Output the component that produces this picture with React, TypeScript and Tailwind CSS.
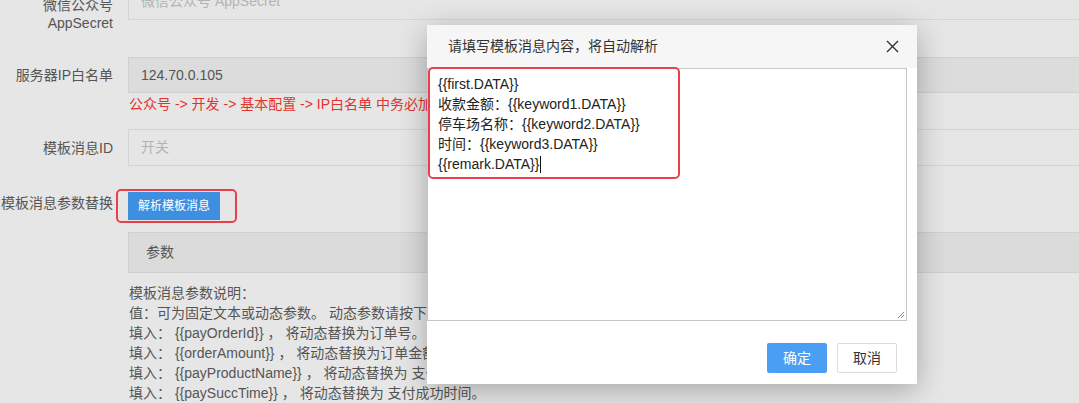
import React from "react";

const FONT = "font-['Liberation_Sans','Noto_Sans_CJK_SC',sans-serif]";

const descLines = [
  "模板消息参数说明：",
  "值：可为固定文本或动态参数。 动态参数请按下列格式填写：",
  "填入： {{payOrderId}} ， 将动态替换为订单号。",
  "填入： {{orderAmount}} ， 将动态替换为订单金额。",
  "填入： {{payProductName}} ， 将动态替换为 支付商品名称。",
  "填入： {{paySuccTime}} ， 将动态替换为 支付成功时间。",
];

const templateLines = [
  "{{first.DATA}}",
  "收款金额：{{keyword1.DATA}}",
  "停车场名称：{{keyword2.DATA}}",
  "时间：{{keyword3.DATA}}",
];

function Label({ children, className = "" }: { children: React.ReactNode; className?: string }) {
  return <div className={`w-[113px] shrink-0 text-right text-[14px] text-[#555] ${className}`}>{children}</div>;
}

export default function App() {
  return (
    <div className={`relative w-[1079px] h-[403px] overflow-hidden bg-[#e6e6e6] ${FONT}`}>
      {/* form behind the dialog */}
      <div className="-mt-[17px] flex flex-col w-[1100px]">
        {/* AppSecret */}
        <div className="flex gap-[15px] h-[37px]">
          <Label className="pt-[13px] leading-[18px] h-[37px] overflow-visible">
            微信公众号
            <br />
            AppSecret
          </Label>
          <div className="flex-1 h-[37px] border border-[#d4d4d4] flex items-center px-[12px] text-[14px] text-[#b3b3b3]">
            微信公众号 AppSecret
          </div>
        </div>

        {/* IP whitelist */}
        <div className="mt-[37px] flex gap-[15px] items-center">
          <Label className="leading-[20px]">服务器IP白名单</Label>
          <div className="flex-1 h-[36px] border border-[#d0d0d0] bg-[#dcdcdc] flex items-center px-[12px] text-[14px] text-[#555]">
            124.70.0.105
          </div>
        </div>
        <div className="mt-[1px] ml-[129px] w-[298px] overflow-hidden text-[14px] leading-[20px] text-[#e2332f] whitespace-nowrap">
          公众号 -&gt; 开发 -&gt; 基本配置 -&gt; IP白名单 中务必加入该服务器IP
        </div>

        {/* template id */}
        <div className="mt-[15px] flex gap-[15px] items-center">
          <Label className="leading-[20px]">模板消息ID</Label>
          <div className="flex-1 h-[37px] border border-[#d4d4d4] flex items-center px-[12px] text-[14px] text-[#b3b3b3]">
            开关
          </div>
        </div>

        {/* param replace */}
        <div className="mt-[26px] flex gap-[15px] items-start">
          <Label className="pt-[1px] leading-[20px] whitespace-nowrap">模板消息参数替换</Label>
          <div className="flex flex-col flex-1">
            <div className="h-[28px] w-[92px] bg-[#3f8fe0] text-white text-[12px] flex items-center justify-center">
              解析模板消息
            </div>
            <div className="mt-[12px] h-[41px] border border-[#d0d0d0] bg-[#dbdbdb] flex items-center pl-[17px] text-[14px] text-[#555]">
              参数
            </div>
            <div className="mt-[10px] ml-[1px] text-[14px] leading-[20px] text-[#555] whitespace-nowrap">
              {descLines.map((l, i) => (
                <div key={l} className={i === descLines.length - 1 ? "" : "w-[298px] overflow-hidden"}>
                  {l}
                </div>
              ))}
            </div>
          </div>
        </div>
      </div>

      {/* button highlight */}
      <div className="absolute left-[116px] top-[189px] w-[121px] h-[34px] border-2 border-[#e8414b] rounded-[5px]" />

      {/* dialog */}
      <div className="absolute left-[427px] top-[25px] w-[490px] h-[359px] bg-white shadow-[0_6px_28px_rgba(0,0,0,0.28)] flex flex-col">
        <div className="h-[43px] bg-[#f6f6f6] flex items-center justify-between pl-[21px] pr-[18px]">
          <span className="text-[14px] text-[#333]">请填写模板消息内容，将自动解析</span>
          <svg width="13" height="13" viewBox="0 0 13 13" className="text-[#333]">
            <path d="M1 1L12 12M12 1L1 12" stroke="currentColor" strokeWidth="1.4" fill="none" />
          </svg>
        </div>
        <div className="relative h-[253px] w-[480px] border border-[#c6c6c6] pt-[5px] pl-[10px] text-[14px] leading-[20px] text-[#222]">
          {templateLines.map((l) => (
            <div key={l}>{l}</div>
          ))}
          <div className="flex items-center">
            {"{{remark.DATA}}"}
            <span className="ml-[1px] inline-block w-[1px] h-[17px] bg-[#111]" />
          </div>
          <svg width="8" height="8" viewBox="0 0 8 8" className="absolute right-[1px] bottom-[1px]">
            <path d="M7 1L1 7M7 4L4 7" stroke="#888" strokeWidth="1" fill="none" />
          </svg>
        </div>
        <div className="flex justify-end gap-[10px] pr-[20px] mt-[22px]">
          <button className="h-[30px] w-[60px] rounded-[2px] bg-[#4a9ff5] text-white text-[14px]">确定</button>
          <button className="h-[30px] w-[60px] rounded-[2px] border border-[#dcdcdc] bg-white text-[#333] text-[14px]">
            取消
          </button>
        </div>
      </div>

      {/* textarea highlight */}
      <div className="absolute left-[428px] top-[67px] w-[252px] h-[112px] border-2 border-[#e8414b] rounded-[5px]" />
    </div>
  );
}
